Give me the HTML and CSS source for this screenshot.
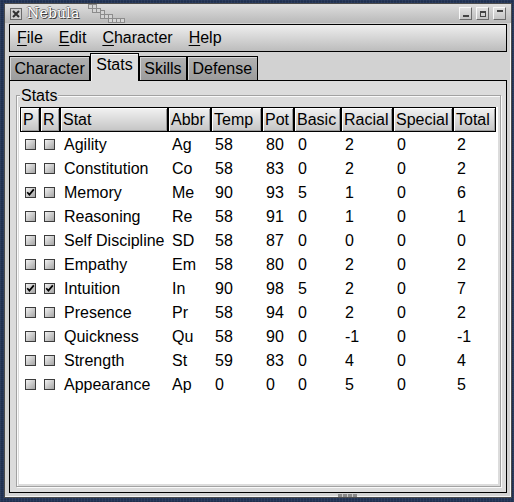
FILE: index.html
```html
<!DOCTYPE html>
<html>
<head>
<meta charset="utf-8">
<title>Nebula</title>
<link rel="stylesheet" href="styles.css">
</head>
<body>
<div class="window">
  <div class="titlebar">
    <svg class="close-btn" width="12" height="12" viewBox="0 0 12 12">
      <rect x="0.5" y="0.5" width="11" height="11" fill="#cfcfcf" stroke="#6a6a6a"/>
      <path d="M3 3 L9 9 M9 3 L3 9" stroke="#333" stroke-width="2"/>
    </svg>
    <span class="title">Nebula</span>
    <svg class="deco" width="40" height="19" viewBox="0 0 40 19">
      <g fill="#d4d4d4" stroke="#8c8c8c" stroke-width="1">
        <rect x="0.5" y="0.5" width="4" height="4"/>
        <rect x="4.5" y="0.5" width="4" height="4"/>
        <rect x="4.5" y="4.5" width="4" height="4"/>
        <rect x="8.5" y="4.5" width="4" height="4"/>
        <rect x="12.5" y="6.5" width="4" height="4"/>
        <rect x="12.5" y="10.5" width="4" height="4"/>
        <rect x="16.5" y="10.5" width="4" height="4"/>
        <rect x="20.5" y="10.5" width="4" height="4"/>
        <rect x="20.5" y="14.5" width="4" height="4"/>
        <rect x="24.5" y="14.5" width="4" height="4"/>
        <rect x="28.5" y="14.5" width="4" height="4"/>
        <rect x="32.5" y="14.5" width="4" height="4"/>
      </g>
    </svg>
    <span class="spacer"></span>
    <span class="wbtn"><svg width="11" height="11" viewBox="0 0 11 11"><rect x="3" y="7" width="6" height="2" fill="#444"/></svg></span>
    <span class="wbtn"><svg width="11" height="11" viewBox="0 0 11 11"><rect x="3" y="3" width="6" height="2" fill="#444"/><rect x="3.5" y="3.5" width="5" height="5" fill="none" stroke="#444"/></svg></span>
    <span class="wbtn"><svg width="11" height="11" viewBox="0 0 11 11"><rect x="3" y="2" width="6" height="2" fill="#444"/></svg></span>
  </div>

  <div class="menubar">
    <span class="menu-item"><u>F</u>ile</span>
    <span class="menu-item"><u>E</u>dit</span>
    <span class="menu-item"><u>C</u>haracter</span>
    <span class="menu-item"><u>H</u>elp</span>
  </div>

  <div class="tabs">
    <span class="tab">Character</span>
    <span class="tab active">Stats</span>
    <span class="tab">Skills</span>
    <span class="tab">Defense</span>
  </div>

  <div class="panel">
    <div class="group">
      <span class="group-title">Stats</span>
      <div class="list">
        <div class="hdr">
          <span>P</span><span>R</span><span>Stat</span><span>Abbr</span><span>Temp</span><span>Pot</span><span>Basic</span><span>Racial</span><span>Special</span><span>Total</span>
        </div>

        <div class="row"><span class="cbp"><i class="cb"></i></span><span class="cbr"><i class="cb"></i></span><span>Agility</span><span>Ag</span><span>58</span><span>80</span><span>0</span><span>2</span><span>0</span><span>2</span></div>
        <div class="row"><span class="cbp"><i class="cb"></i></span><span class="cbr"><i class="cb"></i></span><span>Constitution</span><span>Co</span><span>58</span><span>83</span><span>0</span><span>2</span><span>0</span><span>2</span></div>
        <div class="row"><span class="cbp"><i class="cb checked"><svg width="9" height="9" viewBox="0 0 9 9"><path d="M1.2 4.2 L3.4 6.6 L7.8 1.4" stroke="#000" stroke-width="1.7" fill="none"/></svg></i></span><span class="cbr"><i class="cb"></i></span><span>Memory</span><span>Me</span><span>90</span><span>93</span><span>5</span><span>1</span><span>0</span><span>6</span></div>
        <div class="row"><span class="cbp"><i class="cb"></i></span><span class="cbr"><i class="cb"></i></span><span>Reasoning</span><span>Re</span><span>58</span><span>91</span><span>0</span><span>1</span><span>0</span><span>1</span></div>
        <div class="row"><span class="cbp"><i class="cb"></i></span><span class="cbr"><i class="cb"></i></span><span>Self Discipline</span><span>SD</span><span>58</span><span>87</span><span>0</span><span>0</span><span>0</span><span>0</span></div>
        <div class="row"><span class="cbp"><i class="cb"></i></span><span class="cbr"><i class="cb"></i></span><span>Empathy</span><span>Em</span><span>58</span><span>80</span><span>0</span><span>2</span><span>0</span><span>2</span></div>
        <div class="row"><span class="cbp"><i class="cb checked"><svg width="9" height="9" viewBox="0 0 9 9"><path d="M1.2 4.2 L3.4 6.6 L7.8 1.4" stroke="#000" stroke-width="1.7" fill="none"/></svg></i></span><span class="cbr"><i class="cb checked"><svg width="9" height="9" viewBox="0 0 9 9"><path d="M1.2 4.2 L3.4 6.6 L7.8 1.4" stroke="#000" stroke-width="1.7" fill="none"/></svg></i></span><span>Intuition</span><span>In</span><span>90</span><span>98</span><span>5</span><span>2</span><span>0</span><span>7</span></div>
        <div class="row"><span class="cbp"><i class="cb"></i></span><span class="cbr"><i class="cb"></i></span><span>Presence</span><span>Pr</span><span>58</span><span>94</span><span>0</span><span>2</span><span>0</span><span>2</span></div>
        <div class="row"><span class="cbp"><i class="cb"></i></span><span class="cbr"><i class="cb"></i></span><span>Quickness</span><span>Qu</span><span>58</span><span>90</span><span>0</span><span>-1</span><span>0</span><span>-1</span></div>
        <div class="row"><span class="cbp"><i class="cb"></i></span><span class="cbr"><i class="cb"></i></span><span>Strength</span><span>St</span><span>59</span><span>83</span><span>0</span><span>4</span><span>0</span><span>4</span></div>
        <div class="row"><span class="cbp"><i class="cb"></i></span><span class="cbr"><i class="cb"></i></span><span>Appearance</span><span>Ap</span><span>0</span><span>0</span><span>0</span><span>5</span><span>0</span><span>5</span></div>
      </div>
    </div>
  </div>

  <div class="frame-bottom"><span class="grip"></span></div>
</div>
</body>
</html>
```

FILE: styles.css
```css
html, body {
  margin: 0;
  padding: 0;
}

body {
  width: 514px;
  height: 502px;
  overflow: hidden;
  background-color: #233558;
  background-image:
    repeating-linear-gradient(90deg, rgba(255,255,255,0.05) 0 1px, transparent 1px 3px),
    repeating-linear-gradient(0deg, rgba(0,0,0,0.12) 0 1px, transparent 1px 2px);
  font-family: "Liberation Sans", Arial, sans-serif;
  font-size: 16px;
  color: #000;
}

.window {
  box-sizing: border-box;
  width: 508px;
  height: 495px;
  margin: 3px 0 0 4px;
  padding: 0 4px;
  border: 1px solid #4a4a4a;
  background: #d2d2d2;
  box-shadow: inset -1px -1px 0 #f4f4f4;
  display: flex;
  flex-direction: column;
}

/* title bar */
.titlebar {
  height: 19px;
  margin: 0 -4px 1px;
  padding: 0 5px;
  display: flex;
  align-items: center;
  background: linear-gradient(#dedede, #b9b9b9);
}

.close-btn {
  flex: none;
  display: block;
}

.title {
  margin-left: 5px;
  font-family: "DejaVu Serif", "Liberation Serif", serif;
  font-size: 14px;
  line-height: 19px;
  color: #ffffff;
  text-shadow: 1px 1px 0 #3c3c3c, -1px 0 0 #8a8a8a, 0 -1px 0 #8a8a8a;
  letter-spacing: 0.2px;
}

.deco {
  align-self: flex-start;
  margin-left: 8px;
  flex: none;
}

.spacer {
  flex: 1;
}

.wbtn {
  box-sizing: border-box;
  width: 13px;
  height: 13px;
  margin-left: 4px;
  border: 1px solid;
  border-color: #f8f8f8 #6c6c6c #6c6c6c #f8f8f8;
  background: linear-gradient(#e2e2e2, #c4c4c4);
  display: flex;
}

.wbtn svg {
  display: block;
}

/* menu bar */
.menubar {
  box-sizing: border-box;
  height: 28px;
  margin-bottom: 1px;
  padding-left: 7px;
  border: 1px solid #000;
  background: linear-gradient(#eeeeee, #bcbcbc);
  display: flex;
  align-items: center;
  gap: 16px;
}

.menu-item u {
  text-decoration: underline;
  text-underline-offset: 2px;
}

/* tabs */
.tabs {
  height: 27px;
  display: flex;
  align-items: flex-end;
  position: relative;
  z-index: 1;
}

.tab {
  box-sizing: border-box;
  height: 24px;
  padding: 0 4.5px;
  border: 1px solid #000;
  border-bottom: none;
  line-height: 23px;
  background: linear-gradient(#b2b2b2, #9c9c9c);
  box-shadow: inset 1px 1px 0 #d6d6d6;
}

.tab.active {
  height: 28px;
  margin-bottom: -1px;
  padding: 0 5px 5px;
  line-height: 21px;
  background: #dcdcdc;
  box-shadow: inset 1px 1px 0 #f4f4f4;
}

/* tab panel */
.panel {
  box-sizing: border-box;
  height: 413px;
  padding: 14px 5px 5px 6px;
  border: 1px solid #000;
  background: #dcdcdc;
  display: flex;
  flex-direction: column;
}

.group {
  position: relative;
  flex: 1;
  padding: 11px 2px 2px 2px;
  border: 1px solid #a2a2a2;
  box-shadow: inset 1px 1px 0 #fafafa, 1px 1px 0 #fafafa;
  display: flex;
  flex-direction: column;
}

.group-title {
  position: absolute;
  top: -8px;
  left: 3px;
  padding: 0 1px;
  line-height: 16px;
  background: #dcdcdc;
}

.list {
  flex: 1;
  padding-left: 1px;
  background: #fff;
}

.hdr,
.row {
  display: grid;
  grid-template-columns: 20px 20px 108px 43px 51px 32px 47px 52px 60px 43px;
}

.hdr {
  height: 25px;
}

.hdr span {
  box-sizing: border-box;
  padding-left: 2px;
  border: 1px solid #000;
  line-height: 23px;
  white-space: nowrap;
  overflow: hidden;
  background: linear-gradient(#f2f2f2, #c4c4c4);
  box-shadow: inset 1px 1px 0 #ffffff, inset -1px -1px 0 #9a9a9a;
}

.row {
  box-sizing: border-box;
  height: 24px;
  padding-top: 1px;
  align-items: center;
}

.row span {
  padding-left: 4px;
  white-space: nowrap;
  overflow: hidden;
}

.row .cbp {
  padding-left: 5px;
}

.row .cbr {
  padding-left: 4px;
}

.cb {
  display: block;
  box-sizing: border-box;
  width: 11px;
  height: 11px;
  border: 1px solid #3c3c3c;
  background: linear-gradient(135deg, #f2f2f2, #a4a4a4);
}

.cb svg {
  display: block;
}

/* window bottom frame */
.frame-bottom {
  height: 4px;
  display: flex;
  align-items: center;
}

.grip {
  width: 19px;
  height: 3px;
  margin-left: 329px;
  background: repeating-linear-gradient(90deg, #8a8a8a 0 4px, #c8c8c8 4px 5px);
}
```
